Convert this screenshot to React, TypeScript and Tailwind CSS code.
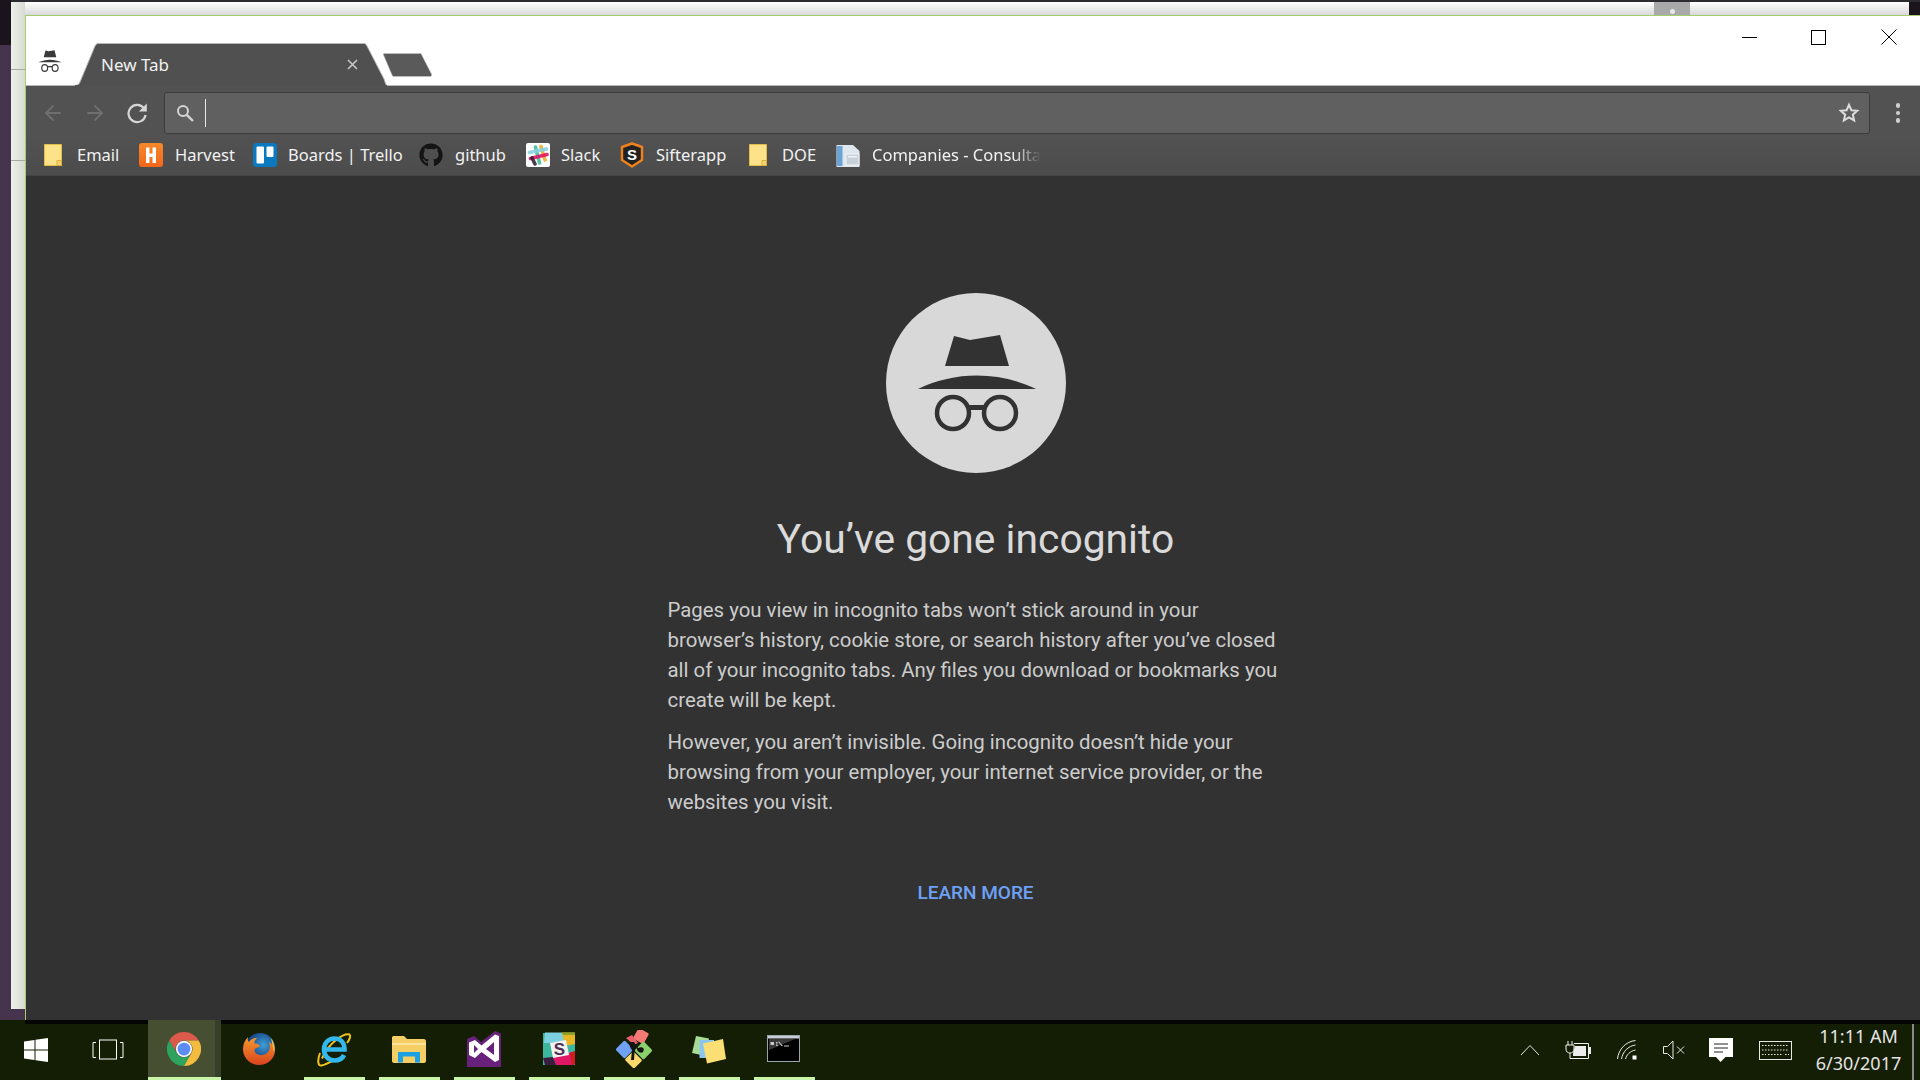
import React from "react";
import { ArrowLeft, ArrowRight } from "lucide-react";
import { FaGithub } from "react-icons/fa";

const Folder = ({ w = 18, h = 22 }: { w?: number; h?: number }) => (
  <svg width={w} height={h} viewBox="0 0 18 22">
    <path d="M0.5 0.5H17.5V21.5H0.5Z" fill="#fde28a" stroke="#e3bd45" />
    <path d="M13 21.5V16.5H17.5V21.5Z" fill="#f5d36a" stroke="#d9ae3a" />
  </svg>
);

const Harvest = () => (
  <svg width="24" height="24" viewBox="0 0 24 24">
    <defs>
      <linearGradient id="hv" x1="0" y1="0" x2="0" y2="1">
        <stop offset="0" stopColor="#f58a2a" />
        <stop offset="1" stopColor="#f3661a" />
      </linearGradient>
    </defs>
    <rect width="24" height="24" rx="3" fill="url(#hv)" />
    <path d="M7 4.5H10.5V10.5H13.5V4.5H17V20H13.5V14H10.5V20H7Z" fill="#fff" />
  </svg>
);

const Trello = () => (
  <svg width="24" height="24" viewBox="0 0 24 24">
    <rect width="24" height="24" rx="3.5" fill="#0b79bf" />
    <rect x="3.5" y="3.5" width="7.5" height="17" rx="1" fill="#fff" />
    <rect x="13.5" y="3.5" width="7" height="10.5" rx="1" fill="#fff" />
  </svg>
);

const SlackTiny = () => (
  <svg width="24" height="24" viewBox="0 0 24 24">
    <rect width="24" height="24" rx="2" fill="#fff" />
    <g strokeWidth="3.6" strokeLinecap="round">
      <path d="M9.5 4L13.5 20" stroke="#3eb991" opacity="0.85" />
      <path d="M15 3.5L19 17" stroke="#e9a820" opacity="0.85" />
      <path d="M3.5 9.5L20.5 6" stroke="#89d3df" opacity="0.9" />
      <path d="M4.5 15.5L21 11.5" stroke="#e01765" opacity="0.9" />
      <path d="M6 15L9 21" stroke="#2b1a30" opacity="0.85" />
    </g>
  </svg>
);

const Sifter = () => (
  <svg width="24" height="26" viewBox="0 0 24 26">
    <path d="M12 1.5L22 5V18L12 24.5L2 18V5Z" fill="#222" stroke="#f0821e" strokeWidth="2.4" strokeLinejoin="round" />
    <text x="12" y="18" textAnchor="middle" fontFamily="Liberation Sans" fontWeight="700" fontSize="15" fill="#fff">S</text>
  </svg>
);

const Pages = () => (
  <svg width="24" height="24" viewBox="0 0 24 24">
    <path d="M0.5 2H17L23.5 8V24H0.5Z" fill="#dfe6ee" />
    <rect x="1" y="3" width="5.5" height="20" fill="#6aa3d5" />
    <rect x="10" y="11" width="13" height="11" fill="#c8d0d8" stroke="#f2f4f6" />
    <rect x="12" y="13" width="9" height="1.5" fill="#f2f4f6" />
  </svg>
);

const Hat = ({ color }: { color: string }) => (
  <svg width="24" height="22" viewBox="56 54 122 98" preserveAspectRatio="none">
    <path d="M94 56L110 60L140 55L149 86H85Z" fill={color} />
    <path d="M58 109C95 93 139 93 176 109Z" fill={color} />
    <circle cx="90" cy="134" r="15" fill="none" stroke={color} strokeWidth="6" />
    <circle cx="143" cy="134" r="15" fill="none" stroke={color} strokeWidth="6" />
    <path d="M104 128H129" fill="none" stroke={color} strokeWidth="6" />
  </svg>
);

const BigIncognito = () => (
  <svg width="180" height="180" viewBox="26 13 180 180" className="shrink-0">
    <circle cx="116" cy="103" r="90" fill="#d8d8d8" />
    <path d="M94 56L110 60L140 55L149 86H85Z" fill="#323232" />
    <path d="M58 109C95 91 139 91 176 109Z" fill="#323232" />
    <circle cx="93" cy="133" r="16" fill="none" stroke="#323232" strokeWidth="4.5" />
    <circle cx="140" cy="133" r="16" fill="none" stroke="#323232" strokeWidth="4.5" />
    <path d="M108 127.5H125" fill="none" stroke="#323232" strokeWidth="5" />
  </svg>
);

const Chrome = () => (
  <svg width="34" height="34" viewBox="0 0 48 48">
    <path d="M24 0A24 24 0 0 0 3.2 12L13.6 30A12 12 0 0 1 24 12H44.8A24 24 0 0 0 24 0Z" fill="#dc5a4b" />
    <path d="M3.2 12A24 24 0 0 0 24 48L34.4 30A12 12 0 0 1 13.6 30Z" fill="#2ea35e" />
    <path d="M44.8 12H24A12 12 0 0 1 34.4 30L24 48A24 24 0 0 0 44.8 12Z" fill="#f3bc3e" />
    <circle cx="24" cy="24" r="11.5" fill="#f4f4f4" />
    <circle cx="24" cy="24" r="9" fill="#5c8df6" />
  </svg>
);

const Firefox = () => (
  <svg width="34" height="34" viewBox="0 0 34 34">
    <defs>
      <radialGradient id="fxb" cx="0.62" cy="0.4" r="0.55">
        <stop offset="0" stopColor="#3f9fd6" />
        <stop offset="1" stopColor="#123a7a" />
      </radialGradient>
      <linearGradient id="fxo" x1="0" y1="0" x2="0" y2="1">
        <stop offset="0" stopColor="#f59a2c" />
        <stop offset="1" stopColor="#d9431f" />
      </linearGradient>
    </defs>
    <circle cx="18" cy="16" r="15" fill="url(#fxb)" />
    <path d="M33 18C33 27 25 33 17 33C8 33 1 26 1 17C1 12 3 8 6 5C5.5 8 6 9 7 10C9 7 12 6 15 6C13 8 12 10 12.5 11.5C15 11 18 12.5 17.5 15C14 15.5 11.5 17 13 20C15 24 22 24 25 21C28 18.5 28.5 14 27 10C31 12 33 15 33 18Z" fill="url(#fxo)" />
    <path d="M29 6C32 10 33.5 15 32 20C31 16 30 10 29 6Z" fill="#f6c24a" />
  </svg>
);

const IE = () => (
  <svg width="36" height="36" viewBox="0 0 36 36">
    <path d="M6 27.5C13 11 28 2 33.5 3.5C35 4.5 34 8 31 12" fill="none" stroke="#f1c21c" strokeWidth="2" />
    <path d="M4 22C1 30 2 35 5.5 34.5C9 34 14 31 17 30" fill="none" stroke="#f1c21c" strokeWidth="2" />
    <path d="M8.5 18.5H28.5C28.5 11 24 7.5 18.5 7.5C12 7.5 8 12.5 8 18.5C8 25 12.5 29.5 18.5 29.5C23 29.5 26.5 27.5 28 24" fill="none" stroke="#33b8ee" strokeWidth="4.6" />
  </svg>
);

const Explorer = () => (
  <svg width="34" height="28" viewBox="0 0 34 28">
    <path d="M0 2.5C0 1.5 1 1 2 1H12L15 4H32C33 4 34 5 34 6V26C34 27 33 28 32 28H2C1 28 0 27 0 26Z" fill="#f5cf66" />
    <path d="M0 8H34V10H0Z" fill="#fbe59b" />
    <path d="M6 27.5V17H28V27.5H23V21.5H11V27.5Z" fill="#1da1e2" />
  </svg>
);

const VS = () => (
  <svg width="34" height="36" viewBox="0 0 34 36">
    <path d="M0 8L7 5L14 11L28 0L34 2.5V30L0 36Z" fill="#68217a" />
    <path d="M0 30V36H34V28Z" fill="#68217a" />
    <path d="M2 11.5L8 9L14.5 14.5L28 3.5L32 5V29L28 31L14.5 21L8 27L2 24ZM7 14V22L11 18ZM27 11L19 18L27 24Z" fill="#fff" fillRule="evenodd" />
  </svg>
);

const SlackApp = () => (
  <svg width="34" height="34" viewBox="0 0 34 34">
    <path d="M1 1H33V33H1Z" fill="#3db6a0" />
    <path d="M3 0.5H20L23 9L7 11L2 11Z" fill="#7dd0df" />
    <path d="M20 0.5H32C33 0.5 33 1 33 2V12L23 14Z" fill="#e8b525" />
    <path d="M20 0.5H33V3L21 3Z" fill="#8ba32a" />
    <path d="M11 25L33 19.5V31C33 32 32 33 31 33H14Z" fill="#e01765" />
    <path d="M28 20.5L33 19V31C33 32 32 33 31 33H30Z" fill="#d31c1c" />
    <path d="M1 26L11 25L14 33H3Z" fill="#3b1c40" />
    <path d="M8 11L24 8L27 23L11 26Z" fill="#f4f1ef" />
    <text x="17.5" y="23" textAnchor="middle" fontFamily="Liberation Sans" fontWeight="700" fontSize="17" fill="#4f2d55">S</text>
  </svg>
);

const Kraken = () => (
  <svg width="38" height="38" viewBox="0 0 38 38">
    <rect x="20" y="0" width="12" height="12" rx="1.5" transform="rotate(30 26 6)" fill="#f57a76" />
    <rect x="3" y="13" width="13" height="13" rx="1.5" transform="rotate(45 9.5 19.5)" fill="#6fa2f5" />
    <rect x="22" y="14" width="13" height="13" rx="1.5" transform="rotate(45 28.5 20.5)" fill="#8ad06b" />
    <rect x="12" y="24" width="13" height="12" rx="1.5" transform="rotate(45 18.5 30)" fill="#f9d96b" />
    <path d="M11 8L17 5L23 13L19 15Z" fill="#e8626e" />
    <path d="M19 12L23 18C28 16 30 19 28 22C25 24 22 21 22 19L20 16L19 30L16 30L17 20C15 18 14 15 15 12Z" fill="#141414" />
  </svg>
);

const Stickies = () => (
  <svg width="34" height="30" viewBox="0 0 34 30">
    <path d="M4 2L17 4.5L14 22L0 19Z" fill="#a8dc96" />
    <path d="M7.5 6H22V24H7.5Z" fill="#8cc6ee" />
    <path d="M11 9.5L31 5L34 25L15 29.5Z" fill="#fbde74" />
  </svg>
);

const Cmd = () => (
  <svg width="33" height="27" viewBox="0 0 33 27">
    <rect x="0.5" y="0.5" width="32" height="26" fill="#000" stroke="#9aa4ad" />
    <rect x="1" y="1" width="31" height="2.5" fill="#c8ced3" />
    <path d="M2 4V15L28 4Z" fill="#3a3a3a" />
    <path d="M3.5 7H7V10H3.5ZM9 7H10.5V8.5H9ZM9 9.5H10.5V11H9ZM12 6.5L16 11H14.5L11 6.5ZM17 10.5H22V11.5H17Z" fill="#c9c9c9" />
  </svg>
);

const bookmarks = [
  { icon: <Folder />, label: "Email", item: "w-[95px]", slot: "w-[33px]" },
  { icon: <Harvest />, label: "Harvest", item: "w-[114px]", slot: "w-[36px]" },
  { icon: <Trello />, label: "Boards | Trello", item: "w-[166px]", slot: "w-[35px]" },
  { icon: <FaGithub size={24} color="#141414" />, label: "github", item: "w-[107px]", slot: "w-[36px]" },
  { icon: <SlackTiny />, label: "Slack", item: "w-[94px]", slot: "w-[35px]" },
  { icon: <Sifter />, label: "Sifterapp", item: "w-[129px]", slot: "w-[36px]" },
  { icon: <Folder />, label: "DOE", item: "w-[87px]", slot: "w-[33px]" },
];

const apps = [
  { icon: <Firefox />, bar: false },
  { icon: <IE />, bar: true },
  { icon: <Explorer />, bar: true },
  { icon: <VS />, bar: true },
  { icon: <SlackApp />, bar: true },
  { icon: <Kraken />, bar: true },
  { icon: <Stickies />, bar: true },
  { icon: <Cmd />, bar: true },
];

export default function App() {
  return (
    <div className="relative flex h-[1080px] w-[1920px] flex-col overflow-hidden bg-[#141e05] font-['Noto_Sans',sans-serif]">
      <div className="flex h-[1020px] shrink-0">
        <div className="flex w-[11px] shrink-0 flex-col bg-[#46334d]">
          <div className="h-[45px] bg-[#1c141c]" />
        </div>
        <div className="flex w-[14px] shrink-0 flex-col bg-[#46334d]">
          <div className="h-[2px] bg-[#2b2b30]" />
          <div className="flex h-[1007px] flex-col bg-linear-to-r from-[#eef1ea] to-[#d8dad4]">
            <div className="h-[68px] border-b border-[#a8a8a8]" />
            <div className="h-[91px] border-b border-[#a8a8a8]" />
          </div>
        </div>
        <div className="flex min-w-0 flex-1 flex-col">
          <div className="flex h-[15px] shrink-0 flex-col">
            <div className="h-[2px] bg-[#2b2b30]" />
            <div className="flex h-[13px] bg-linear-to-b from-[#ffffff] to-[#d9d9d9]">
              <div className="flex-1" />
              <div className="flex h-[13px] w-[36px] items-end justify-center bg-[#a9a9a9] pb-[1px]">
                <div className="h-[5px] w-[5px] rounded-full bg-[#e8e8e8]" />
              </div>
              <div className="w-[219px]" />
              <div className="w-[11px] bg-[#1c141c]" />
            </div>
          </div>
          <div className="flex min-h-0 flex-1 flex-col border-t border-l border-[#a6cc6c]">
            <div className="box-border flex h-[70px] shrink-0 items-end border-b border-[#b8b8b8] bg-white">
              <div className="flex h-[42px] w-[49px] shrink-0 items-start justify-end pr-[13px] pt-[7px]">
                <Hat color="#3a3a3a" />
              </div>
              <div className="relative -mb-px flex h-[43px] w-[312px] shrink-0 items-center pl-[26px] pr-[29px]">
                <svg className="absolute inset-0" width="312" height="43" viewBox="0 0 312 43">
                  <path d="M0 42.5C3 42.5 4 41 5 39L20 3C21 1 22 0.5 24 0.5H288C290 0.5 291 1 292 3L309 36C310 39 311 42.5 312 42.5" fill="#505050" stroke="#b5b5b5" />
                  <path d="M0 42H312V43H0Z" fill="#505050" />
                </svg>
                <span className="relative flex-1 text-[17px] leading-none text-[#f2f2f2]">New Tab</span>
                <svg className="relative" width="11" height="11" viewBox="0 0 11 11">
                  <path d="M1 1L10 10M10 1L1 10" stroke="#c8c8c8" strokeWidth="1.6" />
                </svg>
              </div>
              <svg className="-ml-[5px] mb-[8px] shrink-0" width="50" height="24" viewBox="0 0 50 24">
                <path d="M1.5 2C1 1 1.5 0.5 2.5 0.5H39L49.5 21C50 22.5 49.5 23.5 48 23.5H12C11 23.5 10.5 23 10 22Z" fill="#5a5a5a" stroke="#c8c8c8" strokeWidth="0.6" />
              </svg>
              <div className="flex-1" />
              <div className="flex self-start">
                <div className="flex h-[42px] w-[69px] items-center justify-center">
                  <div className="h-px w-[15px] bg-black" />
                </div>
                <div className="flex h-[42px] w-[69px] items-center justify-center">
                  <div className="h-[15px] w-[15px] border border-black" />
                </div>
                <div className="flex h-[42px] w-[67px] items-center justify-center pl-[5px]">
                  <svg width="16" height="16" viewBox="0 0 16 16">
                    <path d="M0.5 0.5L15.5 15.5M15.5 0.5L0.5 15.5" stroke="#000" strokeWidth="1" />
                  </svg>
                </div>
              </div>
            </div>
            <div className="flex h-[48px] shrink-0 items-start bg-[#525252] pl-[6px] pt-[6px]">
              <div className="flex h-[42px] w-[42px] items-center justify-center text-[#6f6f6f]">
                <ArrowLeft size={24} strokeWidth={1.8} />
              </div>
              <div className="flex h-[42px] w-[42px] items-center justify-center text-[#6f6f6f]">
                <ArrowRight size={24} strokeWidth={1.8} />
              </div>
              <div className="flex h-[42px] w-[42px] items-center justify-center">
                <svg width="22" height="22" viewBox="0 0 22 22">
                  <path d="M18.2 6.6A8.6 8.6 0 1 0 19.6 13" fill="none" stroke="#d6d6d6" strokeWidth="2.2" />
                  <path d="M20.8 1.5V9.5H12.8Z" fill="#d6d6d6" />
                </svg>
              </div>
              <div className="ml-[6px] flex h-[42px] w-[1706px] shrink-0 items-center rounded-[3px] border border-[#3c3c3c] bg-[#606060] pl-[11px] pr-[8px]">
                <svg width="18" height="18" viewBox="0 0 18 18">
                  <circle cx="7" cy="7" r="5" fill="none" stroke="#d4d4d4" strokeWidth="2" />
                  <path d="M10.8 10.8L17 17" stroke="#d4d4d4" strokeWidth="2.4" />
                </svg>
                <div className="ml-[11px] h-[28px] w-px bg-[#e8e8e8]" />
                <div className="flex-1" />
                <svg className="mb-[2px] mr-[1px]" width="22" height="21" viewBox="0 0 22 21">
                  <path d="M11 2.8L13.4 8.2L19.2 8.8L14.8 12.7L16.1 18.4L11 15.4L5.9 18.4L7.2 12.7L2.8 8.8L8.6 8.2Z" fill="none" stroke="#dcdcdc" strokeWidth="2" strokeLinejoin="miter" />
                </svg>
              </div>
              <div className="flex h-[42px] w-[50px] flex-col items-center justify-center gap-[3px] pl-[6px]">
                <div className="h-[4.5px] w-[4.5px] rounded-full bg-[#cfcfcf]" />
                <div className="h-[4.5px] w-[4.5px] rounded-full bg-[#cfcfcf]" />
                <div className="h-[4.5px] w-[4.5px] rounded-full bg-[#cfcfcf]" />
              </div>
            </div>
            <div className="flex h-[42px] shrink-0 items-center border-b border-[#444] bg-linear-to-b from-[#525252] to-[#4c4c4c] pl-[18px] text-[16.5px] text-[#f2f2f2]">
              {bookmarks.map((b) => (
                <div key={b.label} className={`flex shrink-0 items-center ${b.item}`}>
                  <div className={`flex shrink-0 items-center ${b.slot}`}>{b.icon}</div>
                  <span className="whitespace-nowrap pt-[1px]">{b.label}</span>
                </div>
              ))}
              <div className="flex shrink-0 items-center">
                <div className="flex w-[36px] shrink-0 items-center">
                  <Pages />
                </div>
                <span className="whitespace-nowrap pt-[1px] [mask-image:linear-gradient(to_right,black_84%,transparent)]">
                  Companies - Consulta
                </span>
              </div>
            </div>
            <div className="flex min-h-0 flex-1 flex-col items-center bg-[#323232] pl-[5px] pt-[117px] font-['Roboto',sans-serif]">
              <BigIncognito />
              <h1 className="mt-[42px] text-[40.8px] leading-[48px] font-normal text-[#dadada]">You’ve gone incognito</h1>
              <div className="mt-[32px] w-[616px] text-[20.4px] leading-[30px] text-[#cccccc]">
                <p>
                  Pages you view in incognito tabs won’t stick around in your browser’s history, cookie store, or search history after you’ve closed all of your incognito tabs. Any files you download or bookmarks you create will be kept.
                </p>
                <p className="mt-[12px]">
                  However, you aren’t invisible. Going incognito doesn’t hide your browsing from your employer, your internet service provider, or the websites you visit.
                </p>
              </div>
              <div className="mt-[64px] text-[19px] leading-[24px] font-medium text-[#6ea1f5]">LEARN MORE</div>
            </div>
          </div>
        </div>
      </div>
      <div className="relative flex h-[60px] shrink-0 items-stretch text-[#eaeaea]">
        <div className="absolute left-[25px] right-0 top-0 h-[4px] bg-[#050505]" />
        <div className="relative flex w-[72px] items-center justify-center">
          <svg width="24" height="24" viewBox="0 0 24 24">
            <path d="M0 3.5L10.5 2V11.5H0ZM11.5 1.8L24 0V11.5H11.5ZM0 12.5H10.5V22L0 20.5ZM11.5 12.5H24V24L11.5 22.2Z" fill="#fff" />
          </svg>
        </div>
        <div className="relative flex w-[72px] items-center justify-center">
          <svg width="32" height="22" viewBox="0 0 32 22">
            <path d="M4 3.5H1V18.5H4M28 3.5H31V18.5H28" fill="none" stroke="#fff" strokeWidth="1" />
            <rect x="7.5" y="1" width="17" height="19" fill="none" stroke="#fff" strokeWidth="1" />
          </svg>
        </div>
        <div className="relative ml-[4px] flex w-[73px] flex-col">
          <div className="flex flex-1">
            <div className="flex w-[67px] items-center justify-center bg-[#474f33] pl-[5px]">
              <Chrome />
            </div>
            <div className="w-[6px] bg-[#383f28]" />
          </div>
          <div className="h-[3px] bg-[#c8f5a8]" />
        </div>
        {apps.map((a, i) => (
          <div key={i} className="relative flex w-[75px] shrink-0 flex-col">
            <div className="flex flex-1 items-center justify-center">{a.icon}</div>
            <div className={a.bar ? "ml-[8px] mr-[6px] h-[3px] bg-[#c8f5a8]" : "h-[3px]"} />
          </div>
        ))}
        <div className="flex-1" />
        <div className="relative flex w-[48px] items-center justify-center">
          <svg width="20" height="12" viewBox="0 0 20 12">
            <path d="M1 11L10 1.5L19 11" fill="none" stroke="#e4e4e4" strokeWidth="1" />
          </svg>
        </div>
        <div className="relative flex w-[48px] items-center justify-center">
          <svg width="26" height="18" viewBox="0 0 26 18">
            <path d="M3 0V4M7 0V4M1 4H9V8C9 11 7 12 5 12C3 12 1 11 1 8ZM5 12V17.5H23.5V2.5H9" fill="none" stroke="#f0f0f0" strokeWidth="1" />
            <path d="M10 5H21V15H8V12Z" fill="#ececec" />
            <rect x="24" y="6" width="2" height="7" fill="#ececec" />
          </svg>
        </div>
        <div className="relative flex w-[49px] items-center justify-center">
          <svg width="20" height="20" viewBox="0 0 20 20">
            <path d="M0.5 19C1.5 9 9 1.5 18.5 0.5M4.5 19C5.5 12 11 6 18.5 5M8.5 19C9.5 15 13 11 18.5 10" fill="none" stroke="#e8e8e8" strokeWidth="1" />
            <rect x="15.5" y="15.5" width="4" height="4" fill="#fff" />
          </svg>
        </div>
        <div className="relative flex w-[46px] items-center justify-center">
          <svg width="22" height="20" viewBox="0 0 22 20">
            <path d="M0.5 6.5H4.5L10 1V19L4.5 13.5H0.5Z" fill="none" stroke="#e8e8e8" strokeWidth="1" />
            <path d="M14 6.5L21 13.5M21 6.5L14 13.5" stroke="#e8e8e8" strokeWidth="1" />
          </svg>
        </div>
        <div className="relative flex w-[48px] items-center justify-center">
          <svg width="24" height="24" viewBox="0 0 24 24">
            <path d="M0 0H24V19H16.5L11.5 24L7 19H0Z" fill="#fff" />
            <path d="M5 6H19M5 10H19M5 14H14" stroke="#222" strokeWidth="1" />
          </svg>
        </div>
        <div className="relative flex w-[60px] items-center justify-center">
          <svg width="33" height="19" viewBox="0 0 33 19">
            <rect x="0.5" y="0.5" width="32" height="18" fill="none" stroke="#e8e8e8" />
            <path d="M3 4.5H30M3 9H30M3 13.5H7M9 13.5H24M26 13.5H30" stroke="#e8e8e8" strokeWidth="1" strokeDasharray="1.5 1.5" />
          </svg>
        </div>
        <div className="relative flex w-[107px] flex-col items-center justify-center gap-[5px] pb-[2px] text-[18px] leading-[22px] text-[#e4e4e4]">
          <span>11:11 AM</span>
          <span>6/30/2017</span>
        </div>
        <div className="w-[2px] bg-[#8a8a8a]" />
        <div className="w-[6px]" />
      </div>
    </div>
  );
}
